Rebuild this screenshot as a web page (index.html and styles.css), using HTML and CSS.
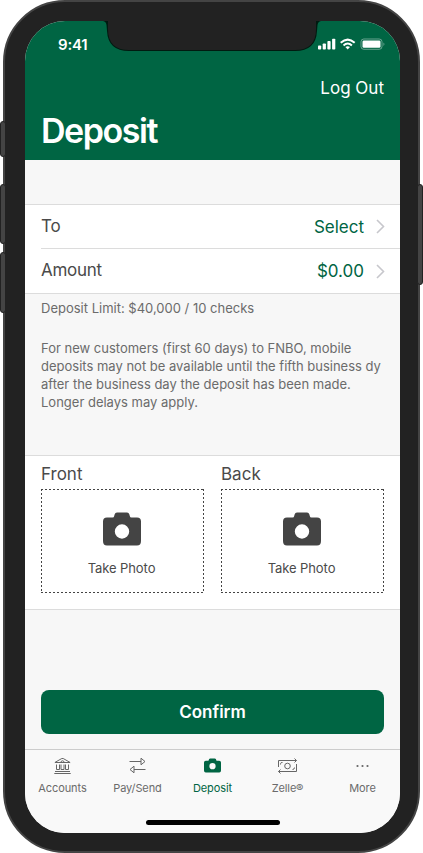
FILE: index.html
```html
<!DOCTYPE html>
<html lang="en">
<head>
<meta charset="utf-8">
<title>Deposit</title>
<link rel="stylesheet" href="styles.css">
</head>
<body>
<div class="phone">
  <span class="key key-mute"></span>
  <span class="key key-up"></span>
  <span class="key key-down"></span>
  <span class="key key-power"></span>
  <div class="screen">
    <svg class="notch" width="213" height="30" viewBox="0 0 213 30">
      <path d="M-3 0Q0 .5 .5 4L1 10Q2 30 23 30H189Q210 30 211 10L211.500 4Q212 .5 215 0Z" fill="#001a10"/>
      <path d="M2 0V8Q2 29 23 29H189Q210 29 210 8V0Z" fill="#222"/>
    </svg>
    <header class="header">
      <div class="status">
        <span class="time">9:41</span>
        <svg class="signals" width="68" height="12" viewBox="0 0 68 12" fill="#fff">
          <rect x="0" y="7.500" width="3.200" height="4" rx=".8"/>
          <rect x="4.700" y="5.500" width="3.200" height="6" rx=".8"/>
          <rect x="9.400" y="3" width="3.200" height="8.500" rx=".8"/>
          <rect x="14.100" y=".8" width="3.200" height="10.700" rx=".8"/>
          <g fill="none" stroke="#fff" stroke-width="2">
            <path d="M22.700 4.800Q29.700 -1.600 36.700 4.800"/>
            <path d="M25.500 7.500Q29.700 3.600 33.900 7.500"/>
          </g>
          <path d="M27.400 9.100Q29.700 7.500 32 9.100L29.700 11.600Z"/>
          <rect x="43" y="1" width="21" height="10.300" rx="2.800" fill="none" stroke="#fff" stroke-opacity=".4"/>
          <rect x="44.500" y="2.500" width="18" height="7.300" rx="1.300"/>
          <path d="M65.500 4.500Q67.300 6 65.500 8Z" fill-opacity=".45"/>
        </svg>
      </div>
      <a class="logout">Log Out</a>
      <h1 class="title">Deposit</h1>
    </header>
    <main class="content">
      <div class="list">
        <div class="row">
          <span class="label">To</span><span class="value">Select</span>
          <svg class="chevron" width="9" height="15" viewBox="0 0 9 15"><path d="M1 1L7.500 7.500L1 14"/></svg>
        </div>
        <div class="row">
          <span class="label">Amount</span><span class="value">$0.00</span>
          <svg class="chevron" width="9" height="15" viewBox="0 0 9 15"><path d="M1 1L7.500 7.500L1 14"/></svg>
        </div>
      </div>
      <div class="notes">
        <p class="limit">Deposit Limit: $40,000 / 10 checks</p>
        <p class="notice">For new customers (first 60 days) to FNBO, mobile<br>deposits may not be available until the fifth business dy<br>after the business day the deposit has been made.<br>Longer delays may apply.</p>
      </div>
      <div class="photos">
        <div class="photo">
          <span class="label">Front</span>
          <div class="drop">
            <svg class="camera" width="38" height="34" viewBox="0 0 38 34"><path fill-rule="evenodd" d="M4 5.500H9.500Q11 5.500 11.200 4L11.600 2.500Q12.200 .5 14 .5H24Q25.800 .5 26.400 2.500L26.800 4Q27 5.500 28.500 5.500H34Q38 5.500 38 9.500V29Q38 33.500 34 33.500H4Q0 33.500 0 29V9.500Q0 5.500 4 5.500ZM19 12.300A7.200 7.200 0 1 0 19 26.700A7.200 7.200 0 1 0 19 12.300Z"/></svg>
            <span class="take">Take Photo</span>
          </div>
        </div>
        <div class="photo">
          <span class="label">Back</span>
          <div class="drop">
            <svg class="camera" width="38" height="34" viewBox="0 0 38 34"><path fill-rule="evenodd" d="M4 5.500H9.500Q11 5.500 11.200 4L11.600 2.500Q12.200 .5 14 .5H24Q25.800 .5 26.400 2.500L26.800 4Q27 5.500 28.500 5.500H34Q38 5.500 38 9.500V29Q38 33.500 34 33.500H4Q0 33.500 0 29V9.500Q0 5.500 4 5.500ZM19 12.300A7.200 7.200 0 1 0 19 26.700A7.200 7.200 0 1 0 19 12.300Z"/></svg>
            <span class="take">Take Photo</span>
          </div>
        </div>
      </div>
      <button class="confirm">Confirm</button>
    </main>
    <nav class="tabs">
      <a class="tab">
        <svg width="17" height="18" viewBox="0 0 17 18"><path d="M1 5.500H16M.8 5.500L7.800 1.500H9.200L16.200 5.500M7 5.500V4.500Q8.500 3 10 4.500V5.500M2.500 7.500V12.500H5.500V7.500M7 7.500V12.500M10 7.500V12.500H7M11.500 7.500V12.500H14.500V7.500M1 14.500H16M.3 16.500H16.700"/></svg>
        <span>Accounts</span>
      </a>
      <a class="tab">
        <svg width="17" height="18" viewBox="0 0 17 18"><path d="M.5 4.500H12M12 1.200V7.800L16 4.500ZM16.500 12.500H5M5 9.200V15.800L1 12.500Z"/></svg>
        <span>Pay/Send</span>
      </a>
      <a class="tab active">
        <svg width="17" height="18" viewBox="0 0 38 40"><path fill-rule="evenodd" d="M4 8H10L11.500 4.500Q12.200 3 14 3H24Q25.800 3 26.500 4.500L28 8H34Q38 8 38 12V30Q38 34.500 34 34.500H4Q0 34.500 0 30V12Q0 8 4 8ZM19 13.500A7 7 0 1 0 19 27.500A7 7 0 1 0 19 13.500Z"/></svg>
        <span>Deposit</span>
      </a>
      <a class="tab">
        <svg width="21" height="18" viewBox="0 0 21 18"><path d="M1.500 10V3.500H19.500M17.500 1.500L19.500 3.500L17.500 5.500M19.500 7V14.500H1.500M3.500 12.500L1.500 14.500L3.500 16.500M3.500 7.500V6.500Q3.500 5.500 5.500 5.500M15.500 12.500Q17.500 12.500 17.500 10.500"/><circle cx="10.500" cy="9" r="2.800"/></svg>
        <span>Zelle®</span>
      </a>
      <a class="tab">
        <svg class="dots" width="17" height="18" viewBox="0 0 17 18"><circle cx="3.500" cy="9" r="1.100"/><circle cx="8.500" cy="9" r="1.100"/><circle cx="13.500" cy="9" r="1.100"/></svg>
        <span>More</span>
      </a>
    </nav>
    <div class="home"></div>
  </div>
</div>
</body>
</html>
```
FILE: styles.css
```css
* { box-sizing: border-box; }
body { margin: 0; background: #fff; font-family: Inter, "Liberation Sans", sans-serif; color: #4a4a4a; overflow: hidden; }
h1, p { margin: 0; }
svg { display: block; flex: none; }
.phone { position: relative; width: 417px; height: 853px; margin-left: 3px; padding: 19px 18px 18px 20px; background: #222; border: 2px solid #444; border-radius: 62px; }
.key { position: absolute; width: 6px; background: #444; border: 1px solid #222; border-radius: 3px; }
.key-mute { left: -5px; top: 119px; height: 36px; }
.key-up { left: -5px; top: 182px; height: 60px; }
.key-down { left: -5px; top: 250px; height: 61px; }
.key-power { right: -5px; top: 182px; height: 101px; }
.screen { position: relative; display: flex; flex-direction: column; width: 375px; height: 812px; overflow: hidden; background: #f7f7f7; border-radius: 40px; }
.notch { position: absolute; left: 81px; top: 0; overflow: visible; }
.header { height: 139px; padding: 0 16px; background: #006543; color: #fff; display: flex; flex-direction: column; flex: none; }
.status { display: flex; justify-content: space-between; align-items: center; height: 46px; padding: 0 0 0 17px; }
.time { font-size: 15px; font-weight: 600; letter-spacing: -.2px; }
.signals { margin-right: -2px; }
.logout { align-self: flex-end; margin-top: 11px; font-size: 17px; line-height: 20px; }
.title { margin-top: 13px; font-size: 34px; line-height: 40px; font-weight: 600; letter-spacing: -1.45px; }
.content { display: flex; flex-direction: column; height: 589px; padding-top: 44px; flex: none; }
.list { height: 90px; padding-left: 16px; background: #fff; border: solid #dcdcdc; border-width: 1px 0; }
.row { display: flex; align-items: center; height: 43px; padding-right: 15px; font-size: 17px; }
.row + .row { height: 45px; border-top: 1px solid #dcdcdc; }
.label { font-size: 17px; }
.row .label { margin-bottom: 1px; letter-spacing: -.1px; }
.row + .row .label { margin-bottom: 3px; letter-spacing: -.3px; }
.value { margin-left: auto; margin-right: 12px; color: #006543; }
.row + .row .value { margin-bottom: 1px; }
.chevron { fill: none; stroke: #c7c7cc; stroke-width: 1.6; }
.notes { padding: 5px 16px 0; height: 161px; font-size: 13px; line-height: 18px; color: #6b6b6b; white-space: nowrap; }
.notice { margin-top: 22px; }
.photos { display: grid; grid-template-columns: 163px 163px; column-gap: 17px; height: 155px; padding: 7px 16px 0; background: #fff; border: solid #dcdcdc; border-width: 1px 0; }
.photo .label { display: block; line-height: 22px; margin-bottom: 4px; }
.drop {
  height: 104px; display: flex; flex-direction: column; align-items: center; padding: 23px 2px 0 0;
  background:
    repeating-linear-gradient(90deg, #444 0 2px, transparent 2px 4px) top / 100% 1px no-repeat,
    repeating-linear-gradient(90deg, #444 0 2px, transparent 2px 4px) bottom / 100% 1px no-repeat,
    repeating-linear-gradient(#444 0 2px, transparent 2px 4px) left / 1px 100% no-repeat,
    repeating-linear-gradient(#444 0 2px, transparent 2px 4px) right / 1px 100% no-repeat;
}
.camera { fill: #444; }
.take { margin-top: 13px; font-size: 13px; line-height: 18px; letter-spacing: -.08px; }
.confirm { height: 44px; margin: 80px 16px 0; border: 0; border-radius: 8px; background: #006543; color: #fff; font: 600 17px Inter, sans-serif; }
.tabs { display: grid; grid-template-columns: repeat(5, 75px); height: 84px; padding-top: 7px; border-top: 1px solid #ccc; background: #f9f9f9; }
.tab { display: flex; flex-direction: column; align-items: center; font-size: 11px; line-height: 14px; letter-spacing: -.1px; color: #6b6b6b; }
.tab span { margin-top: 6px; }
.tab svg { fill: none; stroke: #666; stroke-width: 1; }
.tab.active { color: #006543; }
.tab.active svg { fill: #006543; stroke: none; }
.tab .dots { fill: #666; stroke: none; }
.home { position: absolute; left: 121px; bottom: 8px; width: 134px; height: 5px; border-radius: 3px; background: #000; }
```
